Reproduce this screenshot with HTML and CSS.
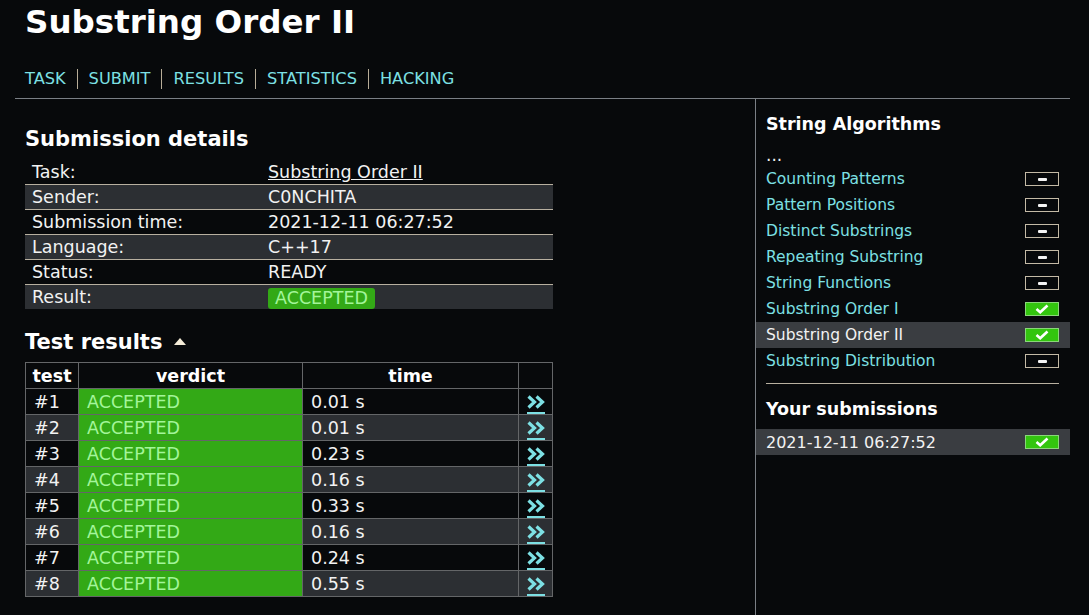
FILE: index.html
```html
<!DOCTYPE html>
<html>
<head>
<meta charset="utf-8">
<link rel="stylesheet" href="styles.css">
</head>
<body>
<div class="page">
  <div class="header">
    <h1 class="title">Substring Order II</h1>
    <nav class="nav">
      <a href="#">TASK</a><span class="sep"></span><a href="#">SUBMIT</a><span class="sep"></span><a href="#">RESULTS</a><span class="sep"></span><a href="#">STATISTICS</a><span class="sep"></span><a href="#">HACKING</a>
    </nav>
  </div>
  <div class="columns">
    <div class="main">
      <h2 class="h2 first">Submission details</h2>
      <table class="details">
        <tr><td class="k">Task:</td><td><a href="#" class="ulink">Substring Order II</a></td></tr>
        <tr class="alt"><td class="k">Sender:</td><td>C0NCHITA</td></tr>
        <tr><td class="k">Submission time:</td><td>2021-12-11 06:27:52</td></tr>
        <tr class="alt"><td class="k">Language:</td><td>C++17</td></tr>
        <tr><td class="k">Status:</td><td>READY</td></tr>
        <tr class="alt"><td class="k">Result:</td><td><span class="badge">ACCEPTED</span></td></tr>
      </table>
      <h2 class="h2 second">Test results <span class="tri"></span></h2>
      <table class="tests">
        <tr class="head"><th class="c1">test</th><th class="c2">verdict</th><th class="c3">time</th><th class="c4"></th></tr>
        <tr><td>#1</td><td class="ok">ACCEPTED</td><td>0.01 s</td><td class="lnk"><a href="#" aria-label="view"><svg class="chev" width="18" height="14" viewBox="0 0 18 14"><polyline points="1.5,1.5 7.5,7 1.5,12.5" /><polyline points="9.5,1.5 15.5,7 9.5,12.5" /></svg></a></td></tr>
        <tr class="alt"><td>#2</td><td class="ok">ACCEPTED</td><td>0.01 s</td><td class="lnk"><a href="#" aria-label="view"><svg class="chev" width="18" height="14" viewBox="0 0 18 14"><polyline points="1.5,1.5 7.5,7 1.5,12.5" /><polyline points="9.5,1.5 15.5,7 9.5,12.5" /></svg></a></td></tr>
        <tr><td>#3</td><td class="ok">ACCEPTED</td><td>0.23 s</td><td class="lnk"><a href="#" aria-label="view"><svg class="chev" width="18" height="14" viewBox="0 0 18 14"><polyline points="1.5,1.5 7.5,7 1.5,12.5" /><polyline points="9.5,1.5 15.5,7 9.5,12.5" /></svg></a></td></tr>
        <tr class="alt"><td>#4</td><td class="ok">ACCEPTED</td><td>0.16 s</td><td class="lnk"><a href="#" aria-label="view"><svg class="chev" width="18" height="14" viewBox="0 0 18 14"><polyline points="1.5,1.5 7.5,7 1.5,12.5" /><polyline points="9.5,1.5 15.5,7 9.5,12.5" /></svg></a></td></tr>
        <tr><td>#5</td><td class="ok">ACCEPTED</td><td>0.33 s</td><td class="lnk"><a href="#" aria-label="view"><svg class="chev" width="18" height="14" viewBox="0 0 18 14"><polyline points="1.5,1.5 7.5,7 1.5,12.5" /><polyline points="9.5,1.5 15.5,7 9.5,12.5" /></svg></a></td></tr>
        <tr class="alt"><td>#6</td><td class="ok">ACCEPTED</td><td>0.16 s</td><td class="lnk"><a href="#" aria-label="view"><svg class="chev" width="18" height="14" viewBox="0 0 18 14"><polyline points="1.5,1.5 7.5,7 1.5,12.5" /><polyline points="9.5,1.5 15.5,7 9.5,12.5" /></svg></a></td></tr>
        <tr><td>#7</td><td class="ok">ACCEPTED</td><td>0.24 s</td><td class="lnk"><a href="#" aria-label="view"><svg class="chev" width="18" height="14" viewBox="0 0 18 14"><polyline points="1.5,1.5 7.5,7 1.5,12.5" /><polyline points="9.5,1.5 15.5,7 9.5,12.5" /></svg></a></td></tr>
        <tr class="alt"><td>#8</td><td class="ok">ACCEPTED</td><td>0.55 s</td><td class="lnk"><a href="#" aria-label="view"><svg class="chev" width="18" height="14" viewBox="0 0 18 14"><polyline points="1.5,1.5 7.5,7 1.5,12.5" /><polyline points="9.5,1.5 15.5,7 9.5,12.5" /></svg></a></td></tr>
      </table>
    </div>
    <div class="side">
      <h3 class="h3 first">String Algorithms</h3>
      <div class="dots">...</div>
      <ul class="tasks">
        <li><a href="#">Counting Patterns</a><span class="st none"><span class="dash"></span></span></li>
        <li><a href="#">Pattern Positions</a><span class="st none"><span class="dash"></span></span></li>
        <li><a href="#">Distinct Substrings</a><span class="st none"><span class="dash"></span></span></li>
        <li><a href="#">Repeating Substring</a><span class="st none"><span class="dash"></span></span></li>
        <li><a href="#">String Functions</a><span class="st none"><span class="dash"></span></span></li>
        <li><a href="#">Substring Order I</a><span class="st done"><svg width="14" height="10" viewBox="0 0 14 10"><path d="M1.5 5 L5.2 8.3 L12.5 1.5" fill="none" stroke="#fff" stroke-width="2.6"/></svg></span></li>
        <li class="cur"><span class="curtext">Substring Order II</span><span class="st done"><svg width="14" height="10" viewBox="0 0 14 10"><path d="M1.5 5 L5.2 8.3 L12.5 1.5" fill="none" stroke="#fff" stroke-width="2.6"/></svg></span></li>
        <li><a href="#">Substring Distribution</a><span class="st none"><span class="dash"></span></span></li>
      </ul>
      <hr class="rule">
      <h3 class="h3 second">Your submissions</h3>
      <ul class="tasks subs">
        <li class="cur"><span class="curtext">2021-12-11 06:27:52</span><span class="st done"><svg width="14" height="10" viewBox="0 0 14 10"><path d="M1.5 5 L5.2 8.3 L12.5 1.5" fill="none" stroke="#fff" stroke-width="2.6"/></svg></span></li>
      </ul>
    </div>
  </div>
</div>
</body>
</html>
```
FILE: styles.css
```css
html, body {
  margin: 0;
  padding: 0;
  background: #07090b;
  color: #f2f2f2;
  font-family: "DejaVu Sans", Verdana, sans-serif;
  font-size: 17.5px;
  height: 100%;
  overflow: hidden;
}
a { color: #7de0e4; text-decoration: none; }
.page {
  padding: 0 19px 0 15px;
  height: 100%;
}
.header {
  border-bottom: 1px solid #7a7f85;
  padding-left: 10px;
}
.title {
  margin: 0;
  font-size: 32.5px;
  line-height: 44px;
  font-weight: bold;
  color: #ffffff;
}
.nav {
  display: flex;
  align-items: center;
  font-size: 16.2px;
  padding: 24px 0 8px;
  line-height: 22px;
}
.nav .sep {
  display: inline-block;
  width: 1px;
  height: 20px;
  background: #b8ad98;
  margin: 0 11px;
}
.columns {
  display: flex;
  height: 100%;
}
.main {
  width: 740px;
  padding-left: 10px;
  box-sizing: border-box;
}
.side {
  flex: 1;
  border-left: 1px solid #7a7f85;
  padding-top: 12px;
}
.h2 {
  font-size: 21px;
  font-weight: bold;
  margin: 0;
  line-height: 26px;
  color: #fff;
}
.h2.first { margin: 27px 0 8px; }
.h2.second { margin: 20px 0 7px; }
.tri {
  display: inline-block;
  width: 0; height: 0;
  border-left: 6px solid transparent;
  border-right: 6px solid transparent;
  border-bottom: 7px solid #f4ecd8;
  vertical-align: middle;
  margin-left: 4px;
  margin-top: -4px;
}
.details {
  width: 528px;
  border-collapse: collapse;
}
.details td {
  height: 24px;
  padding: 0 0 0 7px;
  border-top: 1px solid #b8b0a0;
  line-height: 24px;
  white-space: nowrap;
}
.details tr:first-child td { border-top: none; }
.details td.k { width: 229px; }
.details tr.alt td { background: #2c2f33; }
.ulink { color: #f2f2f2; text-decoration: underline; }
.badge {
  display: inline-block;
  background: #33a916;
  color: #a3f59a;
  border-radius: 3px;
  padding: 0 7px;
  line-height: 21px;
  vertical-align: middle;
}
.tests {
  width: 528px;
  border-collapse: collapse;
}
.tests th, .tests td {
  border: 1px solid #646668;
  height: 25px;
  padding: 0 0 0 8px;
  line-height: 24px;
  white-space: nowrap;
  box-sizing: border-box;
}
.tests tr { height: 26px; }
.tests th {
  text-align: center;
  font-weight: bold;
  padding: 0;
  color: #fff;
}
.tests .c1 { width: 53px; }
.tests .c2 { width: 224px; }
.tests .c3 { width: 216px; }
.tests tr.alt td { background: #2c2f33; }
.tests tr td.ok { background: #33a916; color: #a3f59a; }
.tests td.lnk { text-align: center; padding: 0; }
.tests td.lnk a {
  display: inline-block;
  height: 17px;
  padding: 0;
  border-bottom: 2px solid #7de0e4;
  vertical-align: middle;
  margin-top: 3px;
  line-height: 0;
}
.chev {
  display: block;
  fill: none;
  stroke: #7de0e4;
  stroke-width: 3.2;
}
.h3 {
  font-size: 17.5px;
  font-weight: bold;
  margin: 0 0 0 10px;
  line-height: 26px;
  color: #fff;
}
.h3.second { margin: 12px 0 7px 10px; }
.dots {
  margin: 8px 0 0 10px;
  line-height: 20px;
  height: 20px;
  padding-bottom: 1px;
  font-size: 17px;
}
.tasks {
  list-style: none;
  margin: 0;
  padding: 0;
  font-size: 15.5px;
}
.tasks li {
  display: flex;
  align-items: center;
  justify-content: space-between;
  height: 26px;
  padding: 0 11px 0 10px;
}
.tasks li.cur { background: #3a3d41; }
.subs { font-size: 16px; }
.curtext { color: #f2f2f2; }
.st {
  width: 34px;
  height: 14px;
  box-sizing: border-box;
  display: flex;
  align-items: center;
  justify-content: center;
}
.st.none { border: 1px solid #c4baa6; background: #07090b; }
.st.done { background: #33c50f; border: 1px solid #8ad77a; }
.dash { width: 9px; height: 3px; background: #f4f4f4; border-radius: 1px; }
.rule {
  border: none;
  border-top: 1px solid #b8b0a0;
  margin: 9px 11px 0 10px;
}
```
